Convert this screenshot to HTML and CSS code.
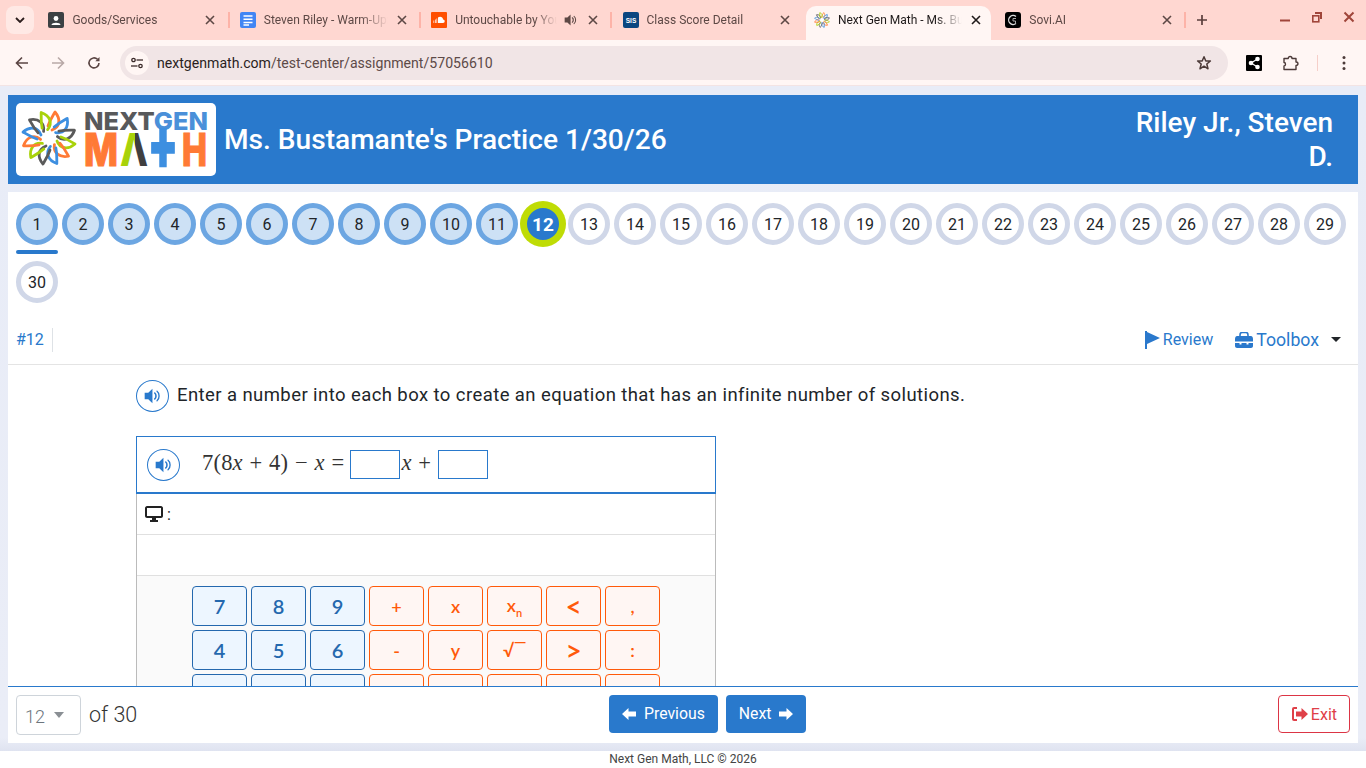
FILE: index.html
```html
<!DOCTYPE html>
<html lang="en">
<head>
    <meta charset="UTF-8">
    <meta name="viewport" content="width=device-width, initial-scale=1.0">
    <title>Next Gen Math - Ms. Bustamante's Practice</title>
    <link rel="stylesheet" href="styles.css">
</head>
<body>
    <svg class="defs" width="0" height="0">
        <symbol id="star" viewBox="-28 -28 56 56">
            <g fill="none" stroke-width="2.800" stroke-linecap="round" stroke-linejoin="round">
                <path stroke="#ff7a35" transform="rotate(0)" d="M3 -8C11 -11 12 -19 6 -26C3 -21 1 -18 -1 -12"/>
                <path stroke="#3d8fe0" transform="rotate(30)" d="M3 -8C11 -11 12 -19 6 -26C3 -21 1 -18 -1 -12"/>
                <path stroke="#5a5a5a" transform="rotate(60)" d="M3 -8C11 -11 12 -19 6 -26C3 -21 1 -18 -1 -12"/>
                <path stroke="#a8d20a" transform="rotate(90)" d="M3 -8C11 -11 12 -19 6 -26C3 -21 1 -18 -1 -12"/>
                <path stroke="#ff7a35" transform="rotate(120)" d="M3 -8C11 -11 12 -19 6 -26C3 -21 1 -18 -1 -12"/>
                <path stroke="#3d8fe0" transform="rotate(150)" d="M3 -8C11 -11 12 -19 6 -26C3 -21 1 -18 -1 -12"/>
                <path stroke="#5a5a5a" transform="rotate(180)" d="M3 -8C11 -11 12 -19 6 -26C3 -21 1 -18 -1 -12"/>
                <path stroke="#a8d20a" transform="rotate(210)" d="M3 -8C11 -11 12 -19 6 -26C3 -21 1 -18 -1 -12"/>
                <path stroke="#ff7a35" transform="rotate(240)" d="M3 -8C11 -11 12 -19 6 -26C3 -21 1 -18 -1 -12"/>
                <path stroke="#3d8fe0" transform="rotate(270)" d="M3 -8C11 -11 12 -19 6 -26C3 -21 1 -18 -1 -12"/>
                <path stroke="#5a5a5a" transform="rotate(300)" d="M3 -8C11 -11 12 -19 6 -26C3 -21 1 -18 -1 -12"/>
                <path stroke="#a8d20a" transform="rotate(330)" d="M3 -8C11 -11 12 -19 6 -26C3 -21 1 -18 -1 -12"/>
            </g>
            <circle r="6" fill="#fff"/>
        </symbol>
        <symbol id="speaker" viewBox="0 0 16 14">
            <path d="M7.500 0.600V13.400L3.800 9.800H0.600V4.200H3.800Z"/>
            <path d="M9.600 4.400C11 5.400 11 8.600 9.600 9.600" fill="none" stroke="currentColor" stroke-width="1.400" stroke-linecap="round"/>
            <path d="M11.600 2.800C14 4.600 14 9.400 11.600 11.200" fill="none" stroke="currentColor" stroke-width="1.200" stroke-linecap="round"/>
        </symbol>
        <symbol id="close" viewBox="0 0 10 10">
            <path d="M1 1L9 9M9 1L1 9" fill="none" stroke="currentColor" stroke-width="1.600"/>
        </symbol>
    </svg>

    <div class="tabstrip">
        <button class="tab-search">
            <svg width="10" height="6" viewBox="0 0 10 6"><path d="M1 1L5 5L9 1" fill="none" stroke="#2b1d1c" stroke-width="1.800"/></svg>
        </button>
        <div class="tab">
            <svg class="favicon" viewBox="0 0 16 16"><rect width="16" height="16" rx="2" fill="#3c4043"/><circle cx="8" cy="6.500" r="2.400" fill="#fff"/><path d="M3.500 13C3.500 10 12.500 10 12.500 13Z" fill="#fff"/></svg>
            <span class="tab-title">Goods/Services</span>
            <svg class="tab-close"><use href="#close"/></svg>
        </div>
        <span class="tab-sep"></span>
        <div class="tab">
            <svg class="favicon" viewBox="0 0 16 16"><rect width="16" height="16" rx="2" fill="#4285f4"/><path d="M3.500 4H12.500M3.500 7.200H12.500M3.500 10.400H12.500M3.500 13H9" stroke="#fff" stroke-width="1.500"/></svg>
            <span class="tab-title">Steven Riley - Warm-Up: Equations</span>
            <svg class="tab-close"><use href="#close"/></svg>
        </div>
        <span class="tab-sep"></span>
        <div class="tab">
            <svg class="favicon" viewBox="0 0 16 16"><rect width="16" height="16" rx="1" fill="#ff4f00"/><path d="M7 5.500C9 4 12 5 12 7.500C14 7.300 14.500 11 12 11H7ZM5.500 6.500H6.200V11H5.500ZM4 7.500H4.700V11H4ZM2.500 8.500H3.200V11H2.500Z" fill="#fff"/></svg>
            <span class="tab-title short">Untouchable by YoungBoy</span>
            <svg class="tab-audio"><use href="#speaker"/></svg>
            <svg class="tab-close"><use href="#close"/></svg>
        </div>
        <span class="tab-sep"></span>
        <div class="tab">
            <svg class="favicon" viewBox="0 0 16 16"><rect width="16" height="16" rx="2" fill="#0b4680"/><text x="8" y="10.500" text-anchor="middle" class="sis">SIS</text></svg>
            <span class="tab-title">Class Score Detail</span>
            <svg class="tab-close"><use href="#close"/></svg>
        </div>
        <span class="tab-sep none"></span>
        <div class="tab active">
            <svg class="favicon"><use href="#star"/></svg>
            <span class="tab-title">Next Gen Math - Ms. Bustamante</span>
            <svg class="tab-close"><use href="#close"/></svg>
        </div>
        <span class="tab-sep none"></span>
        <div class="tab">
            <svg class="favicon" viewBox="0 0 16 16"><rect width="16" height="16" rx="3" fill="#000"/><path d="M11 4.500A4.500 4.500 0 1 0 11 11.500" fill="none" stroke="#ddd" stroke-width="1.300"/><path d="M11 6.500H8V9H10.500V11" fill="none" stroke="#aaa" stroke-width="1"/></svg>
            <span class="tab-title">Sovi.AI</span>
            <svg class="tab-close"><use href="#close"/></svg>
        </div>
        <span class="tab-sep"></span>
        <svg class="new-tab" viewBox="0 0 12 12"><path d="M6 1V11M1 6H11" stroke="#5b3f3c" stroke-width="1.700"/></svg>
        <div class="window-controls">
            <svg width="12" height="12" viewBox="0 0 12 12"><path d="M1 9.500H11" stroke="#a0453a" stroke-width="2"/></svg>
            <svg width="12" height="12" viewBox="0 0 12 12"><path d="M4 1H11V8H9V3H4Z" fill="#a0453a"/><rect x="1.800" y="4.800" width="6" height="6" fill="none" stroke="#a0453a" stroke-width="1.600"/></svg>
            <svg width="12" height="12" viewBox="0 0 12 12"><path d="M1.500 1.500L10.500 10.500M10.500 1.500L1.500 10.500" stroke="#a0453a" stroke-width="2"/></svg>
        </div>
    </div>

    <div class="toolbar">
        <svg class="nav-icon" viewBox="0 0 14 14"><path d="M13 7H2M7 1.500L1.500 7L7 12.500" fill="none" stroke="#5b4543" stroke-width="1.600"/></svg>
        <svg class="nav-icon" viewBox="0 0 14 14"><path d="M1 7H12M7 1.500L12.500 7L7 12.500" fill="none" stroke="#b9a9a7" stroke-width="1.600"/></svg>
        <svg class="nav-icon" viewBox="0 0 14 14"><path d="M12 7A5 5 0 1 1 10.500 3.300" fill="none" stroke="#5b4543" stroke-width="1.600"/><path d="M12.500 1V5.200H8.300Z" fill="#5b4543"/></svg>
        <div class="omnibox">
            <span class="site-info">
                <svg width="14" height="12" viewBox="0 0 14 12"><g fill="none" stroke="#3b2b2a" stroke-width="1.300"><circle cx="3.500" cy="3" r="1.700"/><path d="M6.500 3H13"/><circle cx="10.500" cy="9" r="1.700"/><path d="M1 9H7.500"/></g></svg>
            </span>
            <span class="url"><b>nextgenmath.com</b>/test-center/assignment/57056610</span>
            <svg class="bookmark" viewBox="0 0 16 16"><path d="M8 1.800L9.800 6H14.400L10.800 9L12 13.800L8 11.200L4 13.800L5.200 9L1.600 6H6.200Z" fill="none" stroke="#4c3a38" stroke-width="1.500" stroke-linejoin="round"/></svg>
        </div>
        <svg class="ext-share" viewBox="0 0 16 16"><rect width="16" height="16" rx="1" fill="#000"/><g fill="#fff"><circle cx="5" cy="8" r="2.300"/><circle cx="11.500" cy="4" r="2.300"/><circle cx="11.500" cy="12" r="2.300"/></g><path d="M5 8L11.500 4M5 8L11.500 12" stroke="#fff" stroke-width="1.200"/></svg>
        <svg class="ext-puzzle" viewBox="0 0 16 16"><path d="M1 3.500H5.200C5.200 0.800 9 0.800 9 3.500H13V7C15.600 7 15.600 10.500 13 10.500V14.500H1V11C3 11 3 7.500 1 7.500Z" fill="none" stroke="#4c3a38" stroke-width="1.400" stroke-linejoin="round"/></svg>
        <span class="toolbar-sep"></span>
        <svg class="menu-dots" viewBox="0 0 4 16"><g fill="#4c3a38"><circle cx="2" cy="2.500" r="1.500"/><circle cx="2" cy="8" r="1.500"/><circle cx="2" cy="13.500" r="1.500"/></g></svg>
    </div>

    <div class="page">
        <header class="test-header">
            <svg class="logo" viewBox="0 0 200 73">
                <defs>
                    <linearGradient id="lambda" x1="0" x2="1" y1="0" y2="0">
                        <stop offset="0.520" stop-color="#a8d20a"/>
                        <stop offset="0.520" stop-color="#3f3f3f"/>
                    </linearGradient>
                </defs>
                <use href="#star" x="5" y="7" width="56" height="56"/>
                <text x="68" y="27" class="logo-top" textLength="124" lengthAdjust="spacingAndGlyphs"><tspan fill="#58595b">NEXT</tspan><tspan fill="#4a90d9">GEN</tspan></text>
                <text x="68" y="63" class="logo-math thick" fill="#ff7a35" stroke="#ff7a35" textLength="34" lengthAdjust="spacingAndGlyphs">M</text>
                <text x="104" y="63" class="logo-math" fill="url(#lambda)" textLength="28" lengthAdjust="spacingAndGlyphs">Λ</text>
                <text x="132" y="66" class="logo-plus" textLength="30" lengthAdjust="spacingAndGlyphs">+</text>
                <text x="166" y="63" class="logo-math thick" fill="#ff7a35" stroke="#ff7a35" textLength="25" lengthAdjust="spacingAndGlyphs">H</text>
            </svg>
            <h1 class="test-title">Ms. Bustamante's Practice 1/30/26</h1>
            <div class="student-name">Riley Jr., Steven D.</div>
        </header>

        <main class="main">
            <div class="scroll">
                <nav class="bubbles">
                    <span class="bubble done current">1</span>
                    <span class="bubble done">2</span>
                    <span class="bubble done">3</span>
                    <span class="bubble done">4</span>
                    <span class="bubble done">5</span>
                    <span class="bubble done">6</span>
                    <span class="bubble done">7</span>
                    <span class="bubble done">8</span>
                    <span class="bubble done">9</span>
                    <span class="bubble done">10</span>
                    <span class="bubble done">11</span>
                    <span class="bubble selected">12</span>
                    <span class="bubble">13</span>
                    <span class="bubble">14</span>
                    <span class="bubble">15</span>
                    <span class="bubble">16</span>
                    <span class="bubble">17</span>
                    <span class="bubble">18</span>
                    <span class="bubble">19</span>
                    <span class="bubble">20</span>
                    <span class="bubble">21</span>
                    <span class="bubble">22</span>
                    <span class="bubble">23</span>
                    <span class="bubble">24</span>
                    <span class="bubble">25</span>
                    <span class="bubble">26</span>
                    <span class="bubble">27</span>
                    <span class="bubble">28</span>
                    <span class="bubble">29</span>
                    <span class="bubble">30</span>
                </nav>

                <div class="question-bar">
                    <span class="question-num">#12</span>
                    <a class="review">
                        <svg width="15" height="18" viewBox="0 0 15 18"><path d="M0 0H2V18H0ZM2 1L15 7L2 13Z" fill="#2a78cc"/></svg>
                        Review
                    </a>
                    <a class="toolbox">
                        <svg width="18" height="16" viewBox="0 0 18 16"><path d="M5 5V3C5 1 6 0.500 7 0.500H11C12 0.500 13 1 13 3V5" fill="none" stroke="#2a78cc" stroke-width="1.600"/><path d="M0 7C0 5 1 4 2 4H16C17 4 18 5 18 7V9.500H0ZM0 11H4.500V12.500H6.500V11H11.500V12.500H13.500V11H18V14C18 15 17 16 16 16H2C1 16 0 15 0 14Z" fill="#2a78cc"/></svg>
                        Toolbox
                    </a>
                    <span class="caret"></span>
                </div>

                <div class="question">
                    <div class="prompt">
                        <span class="listen"><svg><use href="#speaker"/></svg></span>
                        <p>Enter a number into each box to create an equation that has an infinite number of solutions.</p>
                    </div>

                    <div class="answer">
                        <div class="equation">
                            <span class="listen"><svg><use href="#speaker"/></svg></span>
                            <span class="math">7(8<i>x</i> + 4) − <i>x</i> =</span>
                            <span class="blank"></span>
                            <span class="math"><i>x</i> +</span>
                            <span class="blank"></span>
                        </div>
                        <div class="preview">
                            <svg width="18" height="16" viewBox="0 0 18 16"><path d="M2 0H16C17 0 18 1 18 2V10C18 11 17 12 16 12H2C1 12 0 11 0 10V2C0 1 1 0 2 0ZM2 2V10H16V2ZM7 12H11V14H13V16H5V14H7Z" fill="#222"/></svg>
                            <span>:</span>
                        </div>
                        <div class="entry"></div>
                        <div class="keypad">
                            <button class="key num">7</button>
                            <button class="key num">8</button>
                            <button class="key num">9</button>
                            <button class="key op">+</button>
                            <button class="key op">x</button>
                            <button class="key op">x<sub>n</sub></button>
                            <button class="key op big">&lt;</button>
                            <button class="key op">,</button>
                            <button class="key num">4</button>
                            <button class="key num">5</button>
                            <button class="key num">6</button>
                            <button class="key op">-</button>
                            <button class="key op">y</button>
                            <button class="key op">√‾</button>
                            <button class="key op big">&gt;</button>
                            <button class="key op">:</button>
                            <button class="key num">1</button>
                            <button class="key num">2</button>
                            <button class="key num">3</button>
                            <button class="key op"></button>
                            <button class="key op">÷</button>
                            <button class="key op"></button>
                            <button class="key op"></button>
                            <button class="key op"></button>
                        </div>
                    </div>
                </div>
            </div>

            <div class="bottom-bar">
                <div class="jump-select">12<span class="jump-caret"></span></div>
                <span class="of-total">of 30</span>
                <div class="pager">
                    <button class="btn-blue">
                        <svg width="14" height="12" viewBox="0 0 14 12"><path d="M6.500 0L0 6L6.500 12V8.500H14V3.500H6.500Z" fill="#fff"/></svg>
                        Previous
                    </button>
                    <button class="btn-blue">
                        Next
                        <svg width="14" height="12" viewBox="0 0 14 12"><path d="M7.500 0L14 6L7.500 12V8.500H0V3.500H7.500Z" fill="#fff"/></svg>
                    </button>
                </div>
                <button class="btn-exit">
                    <svg width="16" height="14" viewBox="0 0 16 14"><path d="M5 1H2C1 1 1 2 1 2V12C1 12 1 13 2 13H5" fill="none" stroke="#df4048" stroke-width="2"/><path d="M9.500 1L16 7L9.500 13V9.500H4V4.500H9.500Z" fill="#df4048"/></svg>
                    Exit
                </button>
            </div>
        </main>
    </div>

    <footer class="site-footer">Next Gen Math, LLC © 2026</footer>
</body>
</html>
```

FILE: styles.css
```css
* {
    box-sizing: border-box;
}

html, body {
    margin: 0;
    height: 768px;
    overflow: hidden;
}

body {
    display: flex;
    flex-direction: column;
    font-family: Roboto, "Liberation Sans", sans-serif;
    color: #212529;
    background: #fff;
}

.defs {
    position: absolute;
}

/* browser chrome */
.tabstrip {
    display: flex;
    align-items: center;
    height: 40px;
    flex: none;
    padding: 6px 0 0 6px;
    background: #ffd7d1;
}

.tab-search {
    display: flex;
    align-items: center;
    justify-content: center;
    width: 28px;
    height: 28px;
    margin: 0 6.400px 6px 0;
    padding: 0;
    border: 0;
    border-radius: 8px;
    background: #ffe9e5;
}

.tab {
    display: flex;
    align-items: center;
    flex: none;
    width: 185px;
    height: 34px;
    padding: 0 10px 6px 8px;
    font-size: 12px;
    color: #5d4845;
    border-radius: 10px 10px 0 0;
}

.tab.active {
    background: #fff6f4;
    color: #1f1a1a;
}

.favicon {
    flex: none;
    width: 16px;
    height: 16px;
    margin-right: 8px;
}

.sis {
    font: bold 6.500px "Liberation Sans", sans-serif;
    fill: #fff;
}

.tab-title {
    flex: 1;
    min-width: 0;
    margin-right: 9px;
    white-space: nowrap;
    overflow: hidden;
    -webkit-mask-image: linear-gradient(to right, #000 78%, transparent 100%);
    mask-image: linear-gradient(to right, #000 78%, transparent 100%);
}

.tab-title.short {
    margin-right: 0;
}

.tab-audio {
    flex: none;
    width: 14px;
    height: 12px;
    margin: 0 10px 0 7px;
    color: #5d4845;
    fill: #5d4845;
}

.tab-close {
    flex: none;
    width: 10px;
    height: 10px;
    color: #5d4845;
}

.tab.active .tab-close {
    color: #1f1a1a;
}

.tab-sep {
    flex: none;
    width: 2px;
    height: 16px;
    margin: 0 2.200px 6px;
    background: #fdb3a8;
}

.tab-sep.none {
    background: transparent;
}

.new-tab {
    width: 12px;
    height: 12px;
    margin: 0 0 6px 7px;
}

.window-controls {
    display: flex;
    gap: 20px;
    margin: 0 11px 0 auto;
    padding-bottom: 12px;
}

.toolbar {
    display: flex;
    align-items: center;
    flex: none;
    height: 46px;
    padding-left: 15px;
    background: #fff6f4;
    border-bottom: 1px solid #f3e4e4;
}

.nav-icon {
    width: 14px;
    height: 14px;
    margin-right: 22px;
}

.omnibox {
    display: flex;
    align-items: center;
    width: 1108px;
    height: 34px;
    margin-left: -3px;
    padding: 0 16px 0 5px;
    border-radius: 17px;
    background: #f1e5e6;
}

.site-info {
    display: flex;
    align-items: center;
    justify-content: center;
    width: 24px;
    height: 24px;
    border-radius: 50%;
    background: #fff6f4;
}

.url {
    margin-left: 8px;
    font-size: 14.100px;
    color: #5d4a48;
}

.url b {
    font-weight: 400;
    color: #2a1e1d;
}

.bookmark {
    width: 16px;
    height: 16px;
    margin-left: auto;
}

.ext-share {
    width: 16px;
    height: 16px;
    margin-left: 18px;
}

.ext-puzzle {
    width: 16px;
    height: 16px;
    margin-left: 21px;
}

.toolbar-sep {
    width: 1px;
    height: 16px;
    margin-left: 18px;
    background: #f6cfc9;
}

.menu-dots {
    width: 4px;
    height: 16px;
    margin-left: 24px;
}

/* page */
.page {
    display: flex;
    flex-direction: column;
    flex: none;
    height: 665px;
    padding: 9px 8px 8px;
    background: linear-gradient(to bottom, #e8ecf7, #eaedf7 98%, #dfe3f0);
}

.test-header {
    display: flex;
    align-items: center;
    flex: none;
    height: 89px;
    margin-bottom: 8px;
    padding: 0 25px 0 8px;
    background: #2979cc;
    color: #fff;
}

.logo {
    flex: none;
    width: 200px;
    height: 73px;
    margin-right: 8px;
    border-radius: 5px;
    background: #fff;
}

.logo-top {
    font: 800 25px Inter, "Liberation Sans", sans-serif;
}

.logo-math {
    font: 800 45px Inter, "Liberation Sans", sans-serif;
}

.logo-math.thick {
    stroke-width: 1.200px;
}

.logo-plus {
    font: 800 72px Inter, "Liberation Sans", sans-serif;
    fill: #3d8fe0;
    stroke: #3d8fe0;
    stroke-width: 2px;
}

.test-title {
    flex: 1;
    margin: 0;
    font-size: 28.100px;
    font-weight: 500;
}

.student-name {
    width: 205px;
    font-size: 28px;
    font-weight: 500;
    line-height: 34px;
    text-align: right;
}

.main {
    display: flex;
    flex-direction: column;
    flex: 1;
    min-height: 0;
    background: #fff;
}

.scroll {
    flex: 1;
    min-height: 0;
    overflow: hidden;
}

.bubbles {
    display: flex;
    flex-wrap: wrap;
    gap: 16px 4px;
    padding: 11px 8px 0;
}

.bubble {
    position: relative;
    display: flex;
    align-items: center;
    justify-content: center;
    width: 42px;
    height: 42px;
    border: 5px solid #d0d7e8;
    border-radius: 50%;
    font-size: 16px;
    color: #212529;
}

.bubble.done {
    border-color: #6ca6e2;
    background: #cde1f5;
}

.bubble.current::after {
    content: "";
    position: absolute;
    left: -5px;
    right: -5px;
    top: 42px;
    height: 4px;
    border-radius: 2px;
    background: #2979cc;
}

.bubble.selected {
    border-color: #bfdc05;
    background: #2979cc;
    color: #fff;
    font-size: 19px;
    font-weight: 700;
    box-shadow: 0 0 0 2px #bfdc05;
}

.question-bar {
    display: flex;
    align-items: center;
    height: 50px;
    margin-top: 12px;
    padding: 0 17px 0 8px;
    border-bottom: 1px solid #e4e4e4;
    color: #2979cc;
}

.question-num {
    height: 24px;
    padding-right: 8px;
    border-right: 1px solid #dee2e6;
    font-size: 16px;
    line-height: 24px;
}

.review {
    display: flex;
    align-items: center;
    gap: 3px;
    margin-left: auto;
    font-size: 16px;
}

.toolbox {
    display: flex;
    align-items: center;
    gap: 3px;
    margin-left: 22px;
    font-size: 17.700px;
}

.caret {
    width: 0;
    height: 0;
    margin-left: 12px;
    border: 5px solid transparent;
    border-top: 5px solid #212529;
    border-bottom: 0;
}

.question {
    padding: 15px 0 0 128px;
}

.prompt {
    display: flex;
    align-items: center;
    gap: 8px;
}

.prompt p {
    margin: 0;
    padding-bottom: 2px;
    font-size: 18.500px;
    letter-spacing: 0.420px;
    color: #212529;
}

.listen {
    display: flex;
    align-items: center;
    justify-content: center;
    flex: none;
    width: 33px;
    height: 32px;
    border: 1px solid #2979cc;
    border-radius: 50%;
    color: #2979cc;
    fill: #2979cc;
}

.listen svg {
    width: 18px;
    height: 16px;
}

.answer {
    width: 580px;
    margin-top: 24px;
    border-left: 1px solid #bbb;
    border-right: 1px solid #bbb;
}

.equation {
    display: flex;
    align-items: center;
    height: 58px;
    margin: 0 -1px;
    padding-left: 10px;
    border: 1px solid #2979cc;
    border-bottom-width: 2px;
}

.equation .listen {
    margin-right: 22px;
}

.math {
    padding-bottom: 3px;
    font: 22.500px "Liberation Serif", serif;
    letter-spacing: 0.200px;
    word-spacing: 0.900px;
    color: #333;
    white-space: pre;
}

.blank {
    width: 50px;
    height: 29px;
    margin: 0 1px 0 6px;
    border: 1px solid #2979cc;
}

.blank:last-child {
    margin-left: 7px;
}

.preview {
    display: flex;
    align-items: center;
    gap: 4px;
    height: 41px;
    padding-left: 8px;
    border-bottom: 1px solid #e0e0e0;
    font-size: 16px;
}

.entry {
    height: 41px;
    border-bottom: 1px solid #e0e0e0;
}

.keypad {
    display: grid;
    grid-template-columns: repeat(8, 55px);
    grid-auto-rows: 40px;
    gap: 4px;
    justify-content: center;
    padding: 10px 0 20px;
    background: #fafafa;
}

.key {
    padding: 0;
    border: 1px solid;
    border-radius: 4px;
    font: 600 18px Lato, "Open Sans", sans-serif;
}

.key sub {
    font-size: 11px;
}

.key.big {
    font-size: 28px;
}

.key.num {
    border-color: #2468ae;
    background: #edf6ff;
    color: #2468ae;
    font-size: 20px;
}

.key.op {
    border-color: #ff5a0a;
    background: #fff6f3;
    color: #ff5a0a;
}

/* bottom bar */
.bottom-bar {
    position: relative;
    display: flex;
    align-items: flex-start;
    flex: none;
    height: 57px;
    padding: 8px 8px 0;
    border-top: 1px solid #2979cc;
    background: #fff;
}

.jump-select {
    display: flex;
    align-items: center;
    width: 65px;
    height: 40px;
    padding: 3px 0 0 8px;
    border: 1px solid #ced4da;
    border-radius: 4px;
    font-size: 18px;
    font-weight: 300;
    color: #6c757d;
}

.jump-caret {
    width: 0;
    height: 0;
    margin: -3px 0 0 9px;
    border: 5px solid transparent;
    border-top: 6px solid #8a8f94;
    border-bottom: 0;
}

.of-total {
    margin-left: 8px;
    font-size: 21.500px;
    font-weight: 300;
    line-height: 40px;
    color: #333;
}

.pager {
    position: absolute;
    left: 601px;
    top: 8px;
    display: flex;
    gap: 8px;
}

.btn-blue {
    display: flex;
    align-items: center;
    gap: 8px;
    height: 38px;
    padding: 0 13px 1px;
    border: 0;
    border-radius: 4px;
    background: #2979cc;
    color: #fff;
    font: 15.800px Roboto, sans-serif;
}

.btn-exit {
    display: flex;
    align-items: center;
    gap: 3px;
    height: 38px;
    margin-left: auto;
    padding: 0 12px 0 13px;
    border: 1px solid #dc3545;
    border-radius: 4px;
    background: #fff;
    color: #df4048;
    font: 16px Roboto, sans-serif;
}

.site-footer {
    flex: 1;
    padding-top: 1px;
    font-size: 12px;
    line-height: 15px;
    text-align: center;
    color: #444;
}
```
